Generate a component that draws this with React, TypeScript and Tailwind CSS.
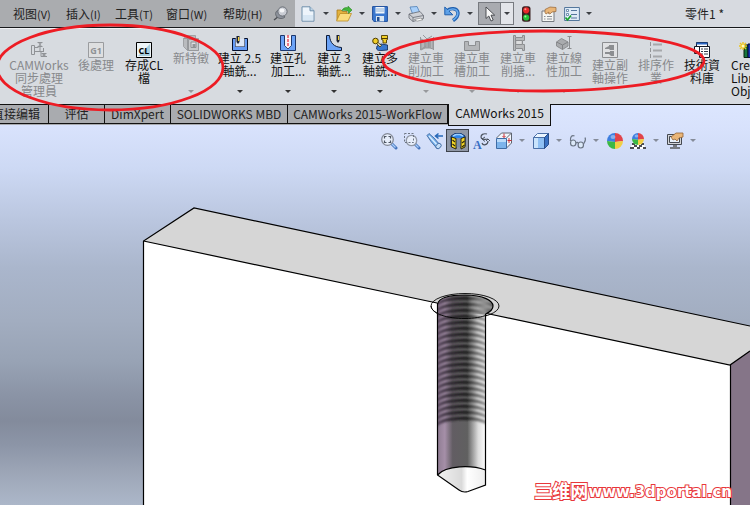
import React from "react";

const MENUS = [
  { label: "视图(V)", width: "w-[53px]" },
  { label: "插入(I)", width: "w-[49px]" },
  { label: "工具(T)", width: "w-[51px]" },
  { label: "窗口(W)", width: "w-[57px]" },
  { label: "帮助(H)", width: "w-[50px]" },
];

function Arrow({ className = "text-[#3c3f44]" }: { className?: string }) {
  return (
    <svg className={className} width="6" height="3" viewBox="0 0 6 3" aria-hidden="true">
      <path d="M0 0h6L3 3z" fill="currentColor" />
    </svg>
  );
}

function Icon({ size = 16, children }: { size?: number; children: React.ReactNode }) {
  return (
    <svg className="block shrink-0" width={size} height={size} viewBox={`0 0 ${size} ${size}`} aria-hidden="true">
      {children}
    </svg>
  );
}

/* ---------- standard toolbar icons ---------- */

const PinIcon = () => (
  <Icon>
    <path d="M1 14l5-4" stroke="#4c4f55" strokeWidth="1.5" />
    <path d="M3 6c1-2 4-2 5 0l4 5c-2 2-6 2-8 0-1-1-2-3-1-5z" fill="#8d929b" stroke="#5b5f66" strokeWidth=".8" />
    <circle cx="9.5" cy="5.5" r="4.6" fill="#c9ccd3" stroke="#62666e" strokeWidth=".9" />
    <ellipse cx="9" cy="4.6" rx="2.4" ry="2" fill="#f4f5f7" />
  </Icon>
);
const NewIcon = () => (
  <Icon>
    <path d="M2 .8h8l4 4v10.4H2z" fill="#edf4fb" stroke="#6f8fab" strokeWidth="1" />
    <path d="M10 .8v4h4" fill="#bfd4e6" stroke="#6f8fab" strokeWidth="1" />
    <path d="M3 9h10v5H3z" fill="#d8e7f4" />
  </Icon>
);
const OpenIcon = () => (
  <Icon>
    <path d="M1 14V4h4l1.5 1.5H11V14z" fill="#e3b23f" stroke="#a97a1a" strokeWidth=".8" />
    <path d="M.5 15L4 7.500h11.500L12 15z" fill="#fbdc7d" stroke="#bd8b25" strokeWidth=".8" />
    <path d="M6 4.5C7.5 1.5 10 1.2 12 2V.2L16 4l-3.500 3.500V5.300C10 4 8 4 6 4.500z" fill="#45b83c" stroke="#268423" strokeWidth=".6" />
  </Icon>
);
const SaveIcon = () => (
  <Icon>
    <path d="M.6.6h14.8v14.8H2L.6 14z" fill="#3b78cf" stroke="#1f4f9c" />
    <path d="M3.500 1h9v6.500h-9z" fill="#f1f6fb" />
    <path d="M4 3h8M4 5h8" stroke="#8eb0d8" />
    <path d="M4 10h8v5.400H4z" fill="#dbe6f1" />
    <path d="M5 11h2.500v4H5z" fill="#244f91" />
  </Icon>
);
const PrintIcon = () => (
  <Icon>
    <path d="M2 1l7-.5 3 6.500-7 2z" fill="#a9d0fa" stroke="#4f7fb5" strokeWidth=".8" />
    <path d="M1 8l11-2.500 3.500 4v3L5 15.500 1 12z" fill="#cfd1d6" stroke="#666a72" strokeWidth=".8" />
    <path d="M1 8l4 3.500 10.500-2M5 11.500v4" fill="none" stroke="#666a72" strokeWidth=".8" />
    <path d="M6.500 13.500l6-1.300 2.500 1.500-6 1.500z" fill="#fff" stroke="#777" strokeWidth=".6" />
  </Icon>
);
const UndoIcon = () => (
  <Icon>
    <path d="M2.500 5.500C6 1.500 13.500 1.500 14 7c.2 3.500-2 5.500-5 7.500" fill="none" stroke="#1f5fae" strokeWidth="3.400" />
    <path d="M.8 1v7.800h8z" fill="#5d9fe6" stroke="#1f5fae" />
    <path d="M3 5.500C6 2 13 2 13.800 7c.2 3-1.800 5-4.500 7" fill="none" stroke="#65a9ee" strokeWidth="1.600" />
  </Icon>
);
const PointerIcon = () => (
  <Icon>
    <path d="M4 1v11.500l2.800-2.500 2.200 5 2.200-1-2.200-4.800h3.700z" fill="#f7f7f7" stroke="#3f4246" strokeWidth=".9" />
  </Icon>
);
const TrafficIcon = () => (
  <Icon>
    <rect x="4" y=".3" width="8.500" height="15.400" rx="2.500" fill="#3b2020" />
    <circle cx="8.200" cy="4.300" r="3.100" fill="#e8292b" />
    <circle cx="8.200" cy="11.500" r="3.100" fill="#23c23a" />
    <circle cx="7.400" cy="3.300" r="1" fill="#ff9a8f" />
    <circle cx="7.400" cy="10.500" r="1" fill="#a0f5a4" />
  </Icon>
);
const HandSheetIcon = () => (
  <Icon>
    <path d="M1 5h12v10.500H1z" fill="#f5f5f2" stroke="#777b81" />
    <path d="M3 10.500h1.500M6 10.500h5M3 13h1.500M6 13h5" stroke="#8b8f96" />
    <path d="M4 3.500L9 1l6 .5v4l-4 .5-2 2-1.500-.5L8 6 5 8 4 6.500z" fill="#e9b577" stroke="#946334" strokeWidth=".7" />
  </Icon>
);
const ListIcon = () => (
  <Icon>
    <path d="M.6 1.500h14.800v13H.6z" fill="#dfebf7" stroke="#54779d" />
    <path d="M2.500 3.500h2v2h-2zM2.500 7.500h2v2h-2z" fill="#fff" stroke="#54779d" strokeWidth=".8" />
    <path d="M7 4.500h6M7 8.500h6M7 12h6" stroke="#54779d" strokeWidth="1.200" />
    <path d="M1.500 11.500l2 2.500L7 9.500" fill="none" stroke="#16a02a" strokeWidth="1.700" />
  </Icon>
);

/* ---------- ribbon icons ---------- */

const SyncIcon = () => (
  <Icon>
    <g fill="none" stroke="#8f9296">
      <path d="M.5 3.500h3v9h-3zM3.500 5.500h4M3.500 9.500h9" />
      <path d="M6.500 .5h5M6.500 4.500h5M7.500 .5l3 4M10.500 .5l-3 4M9 4.500v5" />
      <path d="M12.500 6v4M10 9.500v5M10 14.500h6M11 11.500l4 3M15 11.500l-4 3M10.500 11.500h5" />
    </g>
  </Icon>
);
const G1Icon = () => (
  <Icon>
    <path d="M.5.5h15v15H.5z" fill="#dedfe0" stroke="#9a9c9f" />
    <text x="8" y="12" textAnchor="middle" fontFamily="Open Sans, sans-serif" fontWeight="700" fontSize="9" fill="#8f9296">G1</text>
  </Icon>
);
const CLIcon = () => (
  <Icon>
    <path d="M.5.5h15v15H.5z" fill="#eef5f8" stroke="#000" />
    <path d="M2 14L14 2v12z" fill="#a9cfdf" />
    <text x="8" y="12" textAnchor="middle" fontFamily="Open Sans, sans-serif" fontWeight="700" fontSize="9" fill="#000">CL</text>
  </Icon>
);
const FeatureIcon = () => (
  <Icon>
    <path d="M.5 3.500l4-3h8v3h3v12h-11l-4-4z" fill="#b9bbbe" stroke="#a0a2a5" />
    <path d="M.5 3.500h4M4.500 .5v15M4.500 3.500h8" fill="none" stroke="#97999c" />
    <path d="M5.500 4.500h10v11h-10z" fill="#c6c8ca" stroke="#97999c" />
    <path d="M8 7h5v5.500H8z" fill="#dfe0e2" stroke="#8e9093" />
    <path d="M9.500 9h3v3h-3z" fill="#929497" />
  </Icon>
);
const Mill25Icon = () => (
  <Icon>
    <path d="M.5 3.500h3v8h9v-8h3v12H.5z" fill="#659bf5" stroke="#06102a" />
    <path d="M3.500 4v7.500h9V4z" fill="#dce5f5" />
    <path d="M4.500 1h3v6L6 9 4.500 7z" fill="#1b2130" />
    <path d="M6 2h1.200v4H6z" fill="#f4d23a" />
  </Icon>
);
const HoleIcon = () => (
  <Icon>
    <path d="M.5.500h4v10L8 14l3.500-3.500v-10h4v15H.5z" fill="#6ba3f7" stroke="#1c376c" />
    <path d="M5 .5h6v10l-3 3-3-3z" fill="#f7f3f5" />
    <path d="M8 0v12" stroke="#e62a3b" strokeWidth="1.200" strokeDasharray="3 1" />
  </Icon>
);
const Mill3Icon = () => (
  <Icon>
    <path d="M.5.500h3C4 8 8 12 15.500 12.500v3H.5z" fill="#6ba3f7" stroke="#0b1a38" />
    <path d="M10.500 0h3v6L12 8l-1.500-2z" fill="#1b2130" />
    <path d="M12 1h1v4h-1z" fill="#f4d23a" />
  </Icon>
);
const MultiIcon = () => (
  <Icon>
    <path d="M5 11l4-2 6.500 1v5l-9 .8L4.500 14z" fill="#3978cf" stroke="#0c2552" strokeWidth=".8" />
    <path d="M9.500.5h6v4l-1 .5v3h-3.500V5l-1.500-.5z" fill="#f2cf28" stroke="#4d3c00" strokeWidth=".9" />
    <path d="M5.500 7l4 3.500L8 12 4.500 8.500z" fill="#e8e0b0" stroke="#3c3000" strokeWidth=".8" />
    <circle cx="3.500" cy="6" r="2.800" fill="#f2cf28" stroke="#4d3c00" />
    <path d="M9.500 3.500h6" stroke="#4d3c00" />
  </Icon>
);
const TurnIcon = () => (
  <Icon>
    <path d="M2.500 2v13M15.500 2v13M3 4l4 2v7l-4 2zM7 6h5v7H7zM12 6l3-2v10l-3-1z" fill="#b4b6b9" stroke="#97999c" />
    <path d="M5 0l4 4M14 1L9 4M9 6v7M10.500 6v7M2 15l6-4" stroke="#97999c" />
  </Icon>
);
const GrooveIcon = () => (
  <Icon>
    <path d="M.5 6.500h4v4h7v-4h4v9H.5z" fill="#b4b6b9" stroke="#8c8e91" />
  </Icon>
);
const BoreIcon = () => (
  <Icon>
    <path d="M3.500 .5h2v2h7v-2h2v5h-2v4h2v6h-2v-2h-7v2h-2z" fill="#b7b9bb" stroke="#8c8e91" />
    <path d="M5.500 3v10M5 5.500h7M5 9.500h7" stroke="#8c8e91" />
    <path d="M6.500 6h5v3h-5z" fill="#dcddde" />
  </Icon>
);
const LinearIcon = () => (
  <Icon>
    <path d="M.5 7l5-3.500L12 7v4l-5.500 3.500L.5 11z" fill="#a9abae" stroke="#8c8e91" />
    <path d="M.5 7l6 3L12 7M6.500 10v4.500" fill="none" stroke="#828487" />
    <path d="M11.500 1.500h4M13.500 1.500v12M11.500 13.500h4" stroke="#8c8e91" />
  </Icon>
);
const SubIcon = () => (
  <Icon>
    <path d="M.5.5h15v15H.5z" fill="#e0e1e3" stroke="#8c8e91" />
    <path d="M3 6l4-2V3h5v5H8L7 7H3zM3 10h5V9h4v5H9l-2-2H3z" fill="#8c8e91" />
  </Icon>
);
const SortIcon = () => (
  <Icon>
    <path d="M2.500 0v4M2.500 6v4M2.500 12v4" stroke="#929497" />
    <path d="M5 2.500h9M5 8.500h9M5 14.500h9" stroke="#a6a8ab" strokeWidth="2" />
  </Icon>
);
const DatabaseIcon = () => (
  <Icon>
    <path d="M2.500.5h11v8h-11z" fill="#fff" stroke="#101827" />
    <path d="M2.500 1.500h11" stroke="#2a66c4" strokeWidth="2" />
    <path d="M.5 4.500h6v7h-6z" fill="#fff" stroke="#101827" />
    <path d="M5.500 4.500h10v11h-10z" fill="#fff" stroke="#101827" />
    <path d="M7 7h2M10 7h4M7 9.500h2M10 9.500h4M7 12h2M10 12h4" stroke="#303a4a" />
  </Icon>
);
const LibraryIcon = () => (
  <Icon>
    <path d="M5 3h4v12.500H5z" fill="#16753d" stroke="#06210f" />
    <path d="M9 2h4v13.500H9z" fill="#1634b8" stroke="#050d38" />
    <path d="M13 3h3v12.500h-3z" fill="#851818" stroke="#210505" />
    <path d="M4 0v8M0 4h8M1 1l6 6M7 1L1 7" stroke="#edc51d" strokeWidth="1.400" />
    <circle cx="4" cy="4" r="1.500" fill="#fffbc2" />
  </Icon>
);

type Command = {
  lines: string[];
  icon: () => React.JSX.Element;
  width: string;
  disabled?: boolean;
  menu?: boolean;
};

const COMMANDS: Command[] = [
  { lines: ["CAMWorks", "同步處理", "管理員"], icon: SyncIcon, width: "w-[66px]", disabled: true },
  { lines: ["後處理"], icon: G1Icon, width: "w-[48px]", disabled: true },
  { lines: ["存成CL", "檔"], icon: CLIcon, width: "w-[48px]" },
  { lines: ["新特徵"], icon: FeatureIcon, width: "w-[46px]", disabled: true, menu: true },
  { lines: ["建立 2.5", "軸銑..."], icon: Mill25Icon, width: "w-[51px]", menu: true },
  { lines: ["建立孔", "加工..."], icon: HoleIcon, width: "w-[46px]", menu: true },
  { lines: ["建立 3", "軸銑..."], icon: Mill3Icon, width: "w-[46px]", menu: true },
  { lines: ["建立多", "軸銑..."], icon: MultiIcon, width: "w-[46px]", menu: true },
  { lines: ["建立車", "削加工"], icon: TurnIcon, width: "w-[46px]", disabled: true, menu: true },
  { lines: ["建立車", "槽加工"], icon: GrooveIcon, width: "w-[46px]", disabled: true, menu: true },
  { lines: ["建立車", "削搪..."], icon: BoreIcon, width: "w-[46px]", disabled: true, menu: true },
  { lines: ["建立線", "性加工"], icon: LinearIcon, width: "w-[46px]", disabled: true, menu: true },
  { lines: ["建立副", "軸操作"], icon: SubIcon, width: "w-[46px]", disabled: true },
  { lines: ["排序作", "業"], icon: SortIcon, width: "w-[46px]", disabled: true },
  { lines: ["技術資", "料庫"], icon: DatabaseIcon, width: "w-[46px]" },
];

function RibbonButton({ lines, icon: Glyph, width, disabled, menu }: Command) {
  return (
    <button
      type="button"
      disabled={disabled}
      className={`flex shrink-0 flex-col items-center pb-[11px] ${menu ? "pt-[6px]" : "pt-[13px]"} ${width} ${
        disabled ? "text-[#87898c]" : "text-[#111]"
      }`}
    >
      <Glyph />
      {lines.map((line) => (
        <span key={line} className="block whitespace-nowrap text-[12px] leading-[13px]">
          {line}
        </span>
      ))}
      {menu && (
        <span className="mt-auto">
          <Arrow className={disabled ? "text-[#97999c]" : "text-[#333]"} />
        </span>
      )}
    </button>
  );
}

const TABS = [
  { label: "直接编辑", width: "w-[49px]" },
  { label: "评估", width: "w-[56px]" },
  { label: "DimXpert", width: "w-[66px]" },
  { label: "SOLIDWORKS MBD", width: "w-[117px]" },
  { label: "CAMWorks 2015-WorkFlow", width: "w-[160px]" },
];

/* ---------- heads-up view toolbar icons ---------- */

const Lens = () => (
  <>
    <path d="M11.500 11.500l4.500 4.500" stroke="#4474bd" strokeWidth="3" strokeLinecap="round" />
    <path d="M11.500 11.500l4 4" stroke="#a9cdf8" strokeWidth="1.200" />
  </>
);
const ZoomFitIcon = () => (
  <Icon size={18}>
    <Lens />
    <circle cx="7.500" cy="7.500" r="5.800" fill="#e7eefb" stroke="#858b98" strokeWidth="1.300" />
    <path d="M4.500 6.500v-2h2M8.500 4.500h2v2M10.500 8.500v2h-2M6.500 10.500h-2v-2" fill="none" stroke="#4e5663" strokeWidth="1.200" />
  </Icon>
);
const ZoomAreaIcon = () => (
  <Icon size={18}>
    <Lens />
    <circle cx="8.500" cy="8.500" r="5.200" fill="#e7eefb" stroke="#9299a6" strokeWidth="1.300" />
    <path d="M1.500 1.500h9v9h-9z" fill="none" stroke="#6e7683" strokeDasharray="2 1.500" />
  </Icon>
);
const PrevViewIcon = () => (
  <Icon size={18}>
    <path d="M1 3.500l2-2 5 4.500 6 7-3 3.500-6-7z" fill="#74aeea" stroke="#3c679e" strokeWidth=".9" />
    <path d="M3 4l9 10" stroke="#d8edff" strokeWidth="1.500" />
    <ellipse cx="12.500" cy="14" rx="3" ry="2.300" transform="rotate(-45 12.500 14)" fill="#c3ddf7" stroke="#3c679e" strokeWidth=".9" />
    <path d="M17 4h-7M12.500 1.500L9.500 4l3 2.500" fill="none" stroke="#2668b8" strokeWidth="1.500" />
  </Icon>
);
const SectionIcon = () => (
  <Icon size={18}>
    <path d="M2 4l4-2.500h6l4 2.500v10l-4 2V7H7v9.500l-5-2z" fill="#2f85ea" stroke="#12346c" />
    <path d="M7 6h5v9H7z" fill="#7f8ea8" />
    <path d="M2.500 5L7 6.500V17l-4.500-2zM12 6.500L16 5v10l-4 2z" fill="#f8d927" stroke="#2b2810" />
    <path d="M3.500 8l2.500 2M3.500 12L6 14M13 11l2.500-2M13 15l2.500-2" stroke="#2b2810" strokeWidth="1.200" />
    <path d="M4 4l3-1.500h4L14 4" fill="none" stroke="#9ccfff" strokeWidth="1.500" />
  </Icon>
);
const OrientIcon = () => (
  <Icon size={18}>
    <text x="1" y="17" fontFamily="Liberation Serif, serif" fontWeight="700" fontSize="12" fill="#3a6fc4">A</text>
    <path d="M15 2c-4-1-6 1-6 3s3 3 7 2M10 11c1 3 6 2 6-2" fill="none" stroke="#4c535f" strokeWidth="1.200" />
    <path d="M13 5l-3 2 3 2.500M14 9l2-2 2 2" fill="none" stroke="#4c535f" />
  </Icon>
);
const ViewCubeIcon = () => (
  <Icon size={18}>
    <path d="M1.500 6l5-5h10v10l-5 5" fill="#f0f4fb" stroke="#5e6570" />
    <path d="M11.500 6l5-5" stroke="#5e6570" />
    <path d="M1.500 6.500h10v10h-10z" fill="#7db4ec" stroke="#3f6ca5" />
    <path d="M2 7h9v3H2z" fill="#bcdcfa" />
    <path d="M9 1.500v4M7.500 4L9 5.500 10.500 4M14 6v5M12.500 8.500h4" fill="none" stroke="#cc3339" />
  </Icon>
);
const ShadeIcon = () => (
  <Icon size={18}>
    <path d="M1.500 5.500l4-4h11l-4 4z" fill="#eaf5ff" stroke="#4a6fa7" />
    <path d="M1.500 5.500h11v11h-11z" fill="#8fc0f4" stroke="#4a6fa7" />
    <path d="M12.500 5.500l4-4v11l-4 4z" fill="#3970c2" stroke="#294f8d" />
    <path d="M2 6h4v10H2z" fill="#c9e3fc" />
  </Icon>
);
const GlassesIcon = () => (
  <Icon size={18}>
    <g fill="#dce9f8" stroke="#6b7584" strokeWidth="1.200">
      <path d="M1.500 9C1 5 3 2.500 5.500 4M7 11c1-1 2-1 2.500.5M14.500 12c1-2 3-4 1.500-6.500" fill="none" />
      <ellipse cx="4.200" cy="11" rx="2.700" ry="3" />
      <ellipse cx="11.800" cy="13" rx="2.700" ry="3" />
    </g>
  </Icon>
);
const BallQuarters = () => (
  <>
    <path d="M0-8A8 8 0 0 0-8 0L0 1z" fill="#3d7ee0" />
    <path d="M0-8A8 8 0 0 1 8 0L0 1z" fill="#e1434a" />
    <path d="M-8 0A8 8 0 0 0 0 8V1z" fill="#3bb845" />
    <path d="M8 0A8 8 0 0 1 0 8V1z" fill="#f1cf44" />
    <ellipse cx="-2" cy="-4" rx="2.500" ry="2" fill="#fff" opacity=".4" />
  </>
);
const AppearanceIcon = () => (
  <Icon size={18}>
    <g transform="translate(9 9)"><BallQuarters /></g>
  </Icon>
);
const SceneIcon = () => (
  <Icon size={18}>
    <path d="M4 10h10l3 7H1z" fill="#fff" />
    <path d="M3 11h3v2H3zM12 11h3v2h-3zM5 13h3v2H5zM10 13h3v2h-3zM1 15h4v2H1zM8 15h3v2H8zM14 15h3v2h-3z" fill="#4b4e55" />
    <g transform="translate(9 7) scale(.75)"><BallQuarters /></g>
  </Icon>
);
const ScreenIcon = () => (
  <Icon size={18}>
    <path d="M1.500 2.500h14v10h-14z" fill="#d3d5d9" stroke="#454950" />
    <path d="M3.500 4.500h10v6h-10z" fill="#e7f0fa" stroke="#454950" />
    <path d="M7 13h4v2h3v2H4v-2h3z" fill="#777b82" />
    <path d="M5 5l5-4h7v4l-4 1-2 3-2-2-2 1z" fill="#e9b577" stroke="#946334" strokeWidth=".8" />
  </Icon>
);

type Tool = { name: string; icon: () => React.JSX.Element; menu?: boolean; pressed?: boolean };

const VIEW_TOOLS: Tool[] = [
  { name: "Zoom to fit", icon: ZoomFitIcon },
  { name: "Zoom to area", icon: ZoomAreaIcon },
  { name: "Previous view", icon: PrevViewIcon },
  { name: "Section view", icon: SectionIcon, pressed: true },
  { name: "Annotation view", icon: OrientIcon },
  { name: "View orientation", icon: ViewCubeIcon, menu: true },
  { name: "Display style", icon: ShadeIcon, menu: true },
  { name: "Hide or show items", icon: GlassesIcon, menu: true },
  { name: "Edit appearance", icon: AppearanceIcon },
  { name: "Apply scene", icon: SceneIcon, menu: true },
  { name: "View settings", icon: ScreenIcon, menu: true },
];

const FILE_TOOLS: Tool[] = [
  { name: "New", icon: NewIcon },
  { name: "Open", icon: OpenIcon },
  { name: "Save", icon: SaveIcon },
  { name: "Print", icon: PrintIcon },
  { name: "Undo", icon: UndoIcon },
];

const THREADS = Array.from({ length: 21 }, (_, i) => 300 + i * 6);

/* Plate with a tapped blind hole, cut open along its front face. */
function Model() {
  return (
    <svg
      className="absolute inset-0 h-full w-full"
      viewBox="0 104 750 401"
      preserveAspectRatio="xMinYMin slice"
      role="img"
      aria-label="零件1"
    >
      <defs>
        <linearGradient id="bore" gradientUnits="userSpaceOnUse" x1="437" y1="0" x2="486" y2="0">
          <stop offset="0" stopColor="#8d7b91" />
          <stop offset=".16" stopColor="#a58fa8" />
          <stop offset=".32" stopColor="#625d63" />
          <stop offset=".62" stopColor="#606060" />
          <stop offset=".84" stopColor="#dcdcdc" />
          <stop offset="1" stopColor="#fff" />
        </linearGradient>
        <linearGradient id="groove" gradientUnits="userSpaceOnUse" x1="437" y1="0" x2="486" y2="0">
          <stop offset="0" stopColor="#5d4a62" />
          <stop offset=".3" stopColor="#2b262c" />
          <stop offset=".6" stopColor="#1c1c1c" />
          <stop offset=".82" stopColor="#666" />
          <stop offset="1" stopColor="#999" />
        </linearGradient>
        <linearGradient id="tip">
          <stop offset="0" stopColor="#f2f2f2" />
          <stop offset=".5" stopColor="#dadada" />
          <stop offset=".62" stopColor="#fff" />
          <stop offset="1" stopColor="#ededed" />
        </linearGradient>
        <linearGradient id="rim" gradientUnits="userSpaceOnUse" x1="437" y1="0" x2="494" y2="0">
          <stop offset=".6" stopColor="#444" stopOpacity="0" />
          <stop offset="1" stopColor="#3c3c3c" />
        </linearGradient>
        <filter id="soft" x="-5%" y="-5%" width="110%" height="110%">
          <feGaussianBlur stdDeviation=".9" />
        </filter>
        <clipPath id="wall">
          <path d="M437.500 304C439 298 450 295 465 295C484 295 493 301 493 306C493 310 490 312 485.500 314V474H437.500z" />
        </clipPath>
      </defs>
      <path d="M143.500 241L730 365V505H143.500z" fill="#fff" />
      <path d="M143.500 241L194 208L750 326V351L730 365z" fill="#d6d6d6" />
      <path d="M730 365L750 351V505H730z" fill="#857588" />
      <g fill="none" stroke="#000" strokeWidth="1.200">
        <path d="M143.500 505V241L194 208L750 326M143.500 241L437 303M487 313.500L730 365L750 351M730.500 365V505" />
        <ellipse cx="465" cy="306" rx="34" ry="12.500" strokeWidth=".9" />
      </g>
      <g clipPath="url(#wall)">
        <rect x="437" y="290" width="57" height="190" fill="url(#bore)" />
        <rect x="437" y="290" width="57" height="24" fill="url(#rim)" />
        <g filter="url(#soft)" fill="none" stroke="url(#groove)" strokeWidth="3.200">
          {THREADS.map((y) => (
            <path key={y} d={`M436 ${y + 5}C444 ${y - 3} 476 ${y - 4} ${y < 312 ? 496 : 487} ${y + 3}`} />
          ))}
        </g>
      </g>
      <path d="M437.500 475C446 465 472 465 485.500 470V485L468 491.500Q463 493 459 490z" fill="url(#tip)" />
      <g fill="none" stroke="#000" strokeWidth="1.200">
        <path d="M437.500 303V475L459 490Q463 493 468 491.500L485.500 485V314" />
        <path d="M437.500 475C446 465 472 465 485.500 470" />
        <path d="M437.500 304C439 298 450 295 465 295C484 295 493 301 493 306C493 310 490 312 485.500 314" />
        <path d="M431 306C432 314 447 318.500 465 318.500C474 318.500 482 317 487 315" strokeWidth=".9" />
      </g>
    </svg>
  );
}

export default function App() {
  return (
    <div className="relative flex min-h-screen flex-col overflow-hidden bg-[#d7dae0] font-['Noto_Sans_CJK_SC','Noto_Sans',sans-serif] text-[12px] text-[#111]">
      <header className="flex h-[28px] shrink-0 border-b border-[#16181b] bg-[#d7dae0]">
        <nav aria-label="Menu" className="flex w-[295px] shrink-0 items-center bg-[#aaacaf] pl-[13px] text-[#222]">
          {MENUS.map((menu) => (
            <button key={menu.label} type="button" className={`shrink-0 whitespace-nowrap text-left text-[12px] leading-[16px] ${menu.width}`}>
              {menu.label.slice(0, 2)}
              <span className="text-[11px]">{menu.label.slice(2)}</span>
            </button>
          ))}
          <button type="button" aria-label="Pin menu"><PinIcon /></button>
        </nav>
        <div className="flex flex-1 items-center pl-[2px]">
          {FILE_TOOLS.map(({ name, icon: Glyph }) => (
            <div key={name} className="flex shrink-0 items-center">
              <button type="button" aria-label={name} className="flex w-[22px] justify-center"><Glyph /></button>
              <button type="button" aria-label={`${name} options`} className="flex h-4 w-3.5 items-center justify-center"><Arrow /></button>
            </div>
          ))}
          <div className="ml-px flex h-[23px] shrink-0 border border-[#777a80]">
            <button type="button" aria-label="Select" aria-pressed="true" className="flex w-[22px] items-center justify-center border-r border-[#777a80] bg-[#a9abb0]"><PointerIcon /></button>
            <button type="button" aria-label="Select options" className="flex w-[12px] items-center justify-center bg-[#e3e5ea]"><Arrow /></button>
          </div>
          <button type="button" aria-label="Rebuild" className="flex w-[23px] justify-center"><TrafficIcon /></button>
          <button type="button" aria-label="File properties" className="flex w-[23px] justify-center"><HandSheetIcon /></button>
          <button type="button" aria-label="Options" className="flex w-[23px] justify-center"><ListIcon /></button>
          <button type="button" aria-label="More options" className="flex h-4 w-3 items-center justify-center"><Arrow /></button>
          <h1 className="ml-auto mr-[26px] whitespace-nowrap text-[12px] text-[#222]">零件1 *</h1>
        </div>
      </header>

      <div className="flex h-[76px] shrink-0 overflow-hidden border-t border-[#f0f1f4] bg-[#d7dbe0] pl-[6px]">
        {COMMANDS.map((command) => (
          <RibbonButton key={command.lines.join("")} {...command} />
        ))}
        <button type="button" className="flex shrink-0 flex-col items-start pl-[6px] pt-[13px] text-left text-[12px] leading-[13px]">
          <span className="pl-[8px]"><LibraryIcon /></span>
          <span>Create</span>
          <span>Library</span>
          <span>Object</span>
        </button>
      </div>

      <main className="relative flex flex-1 flex-col bg-[linear-gradient(180deg,#dce6fe_0%,#d8e2fc_6%,#cdd9f4_16%,#bac6df_29%,#aab6cc_41%,#a2adc0_54%,#98a3b5_64%,#8a93a5_73%,#838b9c_79%,#8c95a7_85%,#9da6b7_92%,#acb7c9_100%)]">
        <Model />
        <div role="tablist" aria-label="CommandManager" className="relative flex items-start border-t border-[#111]">
          {TABS.map((tab, i) => (
            <button
              key={tab.label}
              type="button"
              role="tab"
              aria-selected="false"
              className={`flex h-[19px] shrink-0 items-center whitespace-nowrap border-b border-r border-[#111] bg-[#a9abaf] text-[12px] leading-[16px] text-[#222] shadow-[0_1px_0_#a9abaf] ${
                i === 0 ? "justify-end pr-[8px]" : "justify-center"
              } ${tab.width}`}
            >
              {tab.label}
            </button>
          ))}
          <button
            type="button"
            role="tab"
            aria-selected="true"
            className="-mt-px flex h-[22px] w-[103px] shrink-0 items-center justify-center whitespace-nowrap border-b border-l border-r border-[#111] bg-[#d7dbe0] pb-[3px] text-[12px] leading-[16px]"
          >
            CAMWorks 2015
          </button>
        </div>
        <div role="toolbar" aria-label="View" className="relative flex items-center pl-[50%] pt-[3px]">
          <div className="flex pl-[2px]">
            {VIEW_TOOLS.map(({ name, icon: Glyph, menu, pressed }) => (
              <div key={name} className="flex shrink-0 items-center">
                <button
                  type="button"
                  aria-label={name}
                  aria-pressed={pressed}
                  className={`flex h-[23px] w-[23px] items-center justify-center ${pressed ? "border border-[#3e434c] bg-[#8f97a6]" : ""}`}
                >
                  <Glyph />
                </button>
                {menu && (
                  <button type="button" aria-label={`${name} options`} className="flex h-4 w-3.5 items-center justify-center">
                    <Arrow className="text-[#858c99]" />
                  </button>
                )}
              </div>
            ))}
          </div>
        </div>
        <a
          href="#site"
          className="relative mb-[3px] ml-auto mr-[18px] mt-auto flex items-center whitespace-nowrap font-['DejaVu_Sans','Noto_Sans_CJK_SC',sans-serif] text-[15px] font-bold leading-[20px] text-white [-webkit-text-stroke:2px_#e8383b] [paint-order:stroke_fill]"
        >
          <span className="text-[18px]">三维网</span>
          <span>www.3dportal.cn</span>
        </a>
      </main>

      {/* Hand-drawn markup circles over the ribbon */}
      <svg className="pointer-events-none absolute left-0 top-0" width="750" height="120" viewBox="0 0 750 120" aria-hidden="true">
        <g fill="none" stroke="#ed1c24" strokeWidth="2.800">
          <ellipse cx="110" cy="67.500" rx="113" ry="42.500" />
          <ellipse cx="543.500" cy="61" rx="160.500" ry="30" />
        </g>
      </svg>
    </div>
  );
}
